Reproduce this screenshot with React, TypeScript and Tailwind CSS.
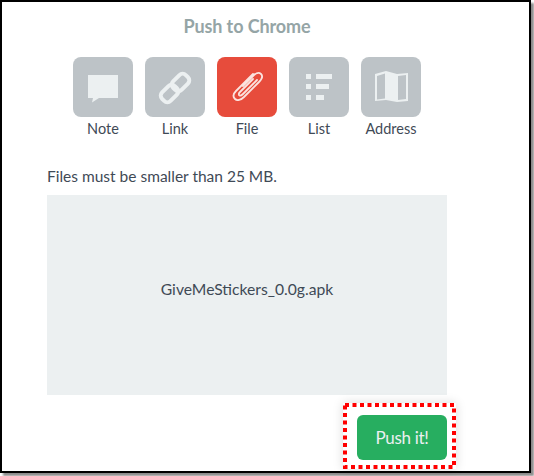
import React from 'react';

const NoteIcon = () => (
    <svg width="60" height="60" viewBox="0 0 60 60">
        <path d="M15 18h30v23H26l-7 4.500 1-4.500h-5z" fill="#ecf0f1" />
    </svg>
);

const LinkIcon = () => (
    <svg width="60" height="60" viewBox="0 0 60 60" fill="none" stroke="#ecf0f1" strokeWidth="4">
        <rect x="-9" y="-6" width="18" height="12" rx="4.500" transform="translate(35.500 25.500) rotate(-45)" />
        <rect x="-9" y="-6" width="18" height="12" rx="4.500" transform="translate(24.500 36.500) rotate(-45)" />
    </svg>
);

const ClipIcon = () => (
    <svg width="60" height="60" viewBox="0 0 60 60" fill="none" stroke="#fbe3df" strokeWidth="1.800" strokeLinecap="round">
        <path d="M26 29l10-10c3-3 6-4 8-2s1 5-2 8L27 40c-3 3-7 4-9 2s-2-5 1-8l17-17" />
        <path d="M36 22L23 35c-1.500 1.500-1.500 3-.5 3.500s2 0 3.500-1.500l14-14" />
    </svg>
);

const ListIcon = () => (
    <svg width="60" height="60" viewBox="0 0 60 60" fill="#ecf0f1">
        <rect x="17" y="17" width="5" height="5" />
        <rect x="27" y="17" width="16" height="5" />
        <rect x="17" y="27" width="5" height="5" />
        <rect x="27" y="27" width="13" height="5" />
        <rect x="17" y="38" width="5" height="5" />
        <rect x="27" y="38" width="8" height="5" />
    </svg>
);

const MapIcon = () => (
    <svg width="60" height="60" viewBox="0 0 60 60">
        <path d="M14 17l11-3 11 3 11-1v28l-11 1-11-2-11 1z" fill="#ecf0f1" />
        <path d="M16 19l8-2.500v25l-8 1zM37 19l8-1v24l-8 1z" fill="#bdc3c7" />
    </svg>
);

const tabs = [
    { label: 'Note', icon: <NoteIcon />, active: false },
    { label: 'Link', icon: <LinkIcon />, active: false },
    { label: 'File', icon: <ClipIcon />, active: true },
    { label: 'List', icon: <ListIcon />, active: false },
    { label: 'Address', icon: <MapIcon />, active: false },
];

export default function App() {
    return (
        <div className="w-[534px] h-[476px] bg-white overflow-hidden font-['Lato','Noto_Sans',sans-serif] text-[#3f4a56]">
            <div className="w-[531px] h-[473px] box-border border-2 border-black shadow-[3px_3px_2px_rgba(0,0,0,0.45)] pl-[45px] pt-[13px] bg-white">
                <div className="w-[400px]">
                    <h1 className="text-center text-[18px] leading-[22px] font-bold tracking-[-0.1px] text-[#95a5a6]">Push to Chrome</h1>
                    <div className="flex justify-center gap-3 mt-[20px]">
                        {tabs.map(tab => (
                            <div key={tab.label} className="w-[60px] flex flex-col items-center">
                                <div className={`w-[60px] h-[60px] rounded-lg ${tab.active ? 'bg-[#e74c3c]' : 'bg-[#bdc3c7]'}`}>
                                    {tab.icon}
                                </div>
                                <span className="mt-[2px] text-[14.500px] leading-[20px] whitespace-nowrap">{tab.label}</span>
                            </div>
                        ))}
                    </div>
                    <p className="mt-[27px] text-[15.500px] leading-[20px]">Files must be smaller than 25 MB.</p>
                    <div className="mt-[9px] h-[200px] pb-[10px] box-border bg-[#ecf0f1] flex items-center justify-center text-[15.700px]">
                        GiveMeStickers_0.0g.apk
                    </div>
                </div>
                <div className="w-[409px] flex justify-end mt-[8px]">
                    <div className="relative w-[113px] h-[66px] box-border pt-[12px] pr-[9px] flex items-start justify-end shadow-[0_0_10px_rgba(0,0,0,0.15)]">
                        <svg className="absolute inset-0" width="113" height="66" fill="none">
                            <rect x="2" y="2" width="109" height="62" stroke="#ff0000" strokeWidth="4" strokeDasharray="4 3.500" />
                        </svg>
                        <button className="w-[90px] h-[45px] rounded-md bg-[#27ae60] text-[#ecf0f1] text-[17px] tracking-[-0.3px]">Push it!</button>
                    </div>
                </div>
            </div>
        </div>
    );
}
